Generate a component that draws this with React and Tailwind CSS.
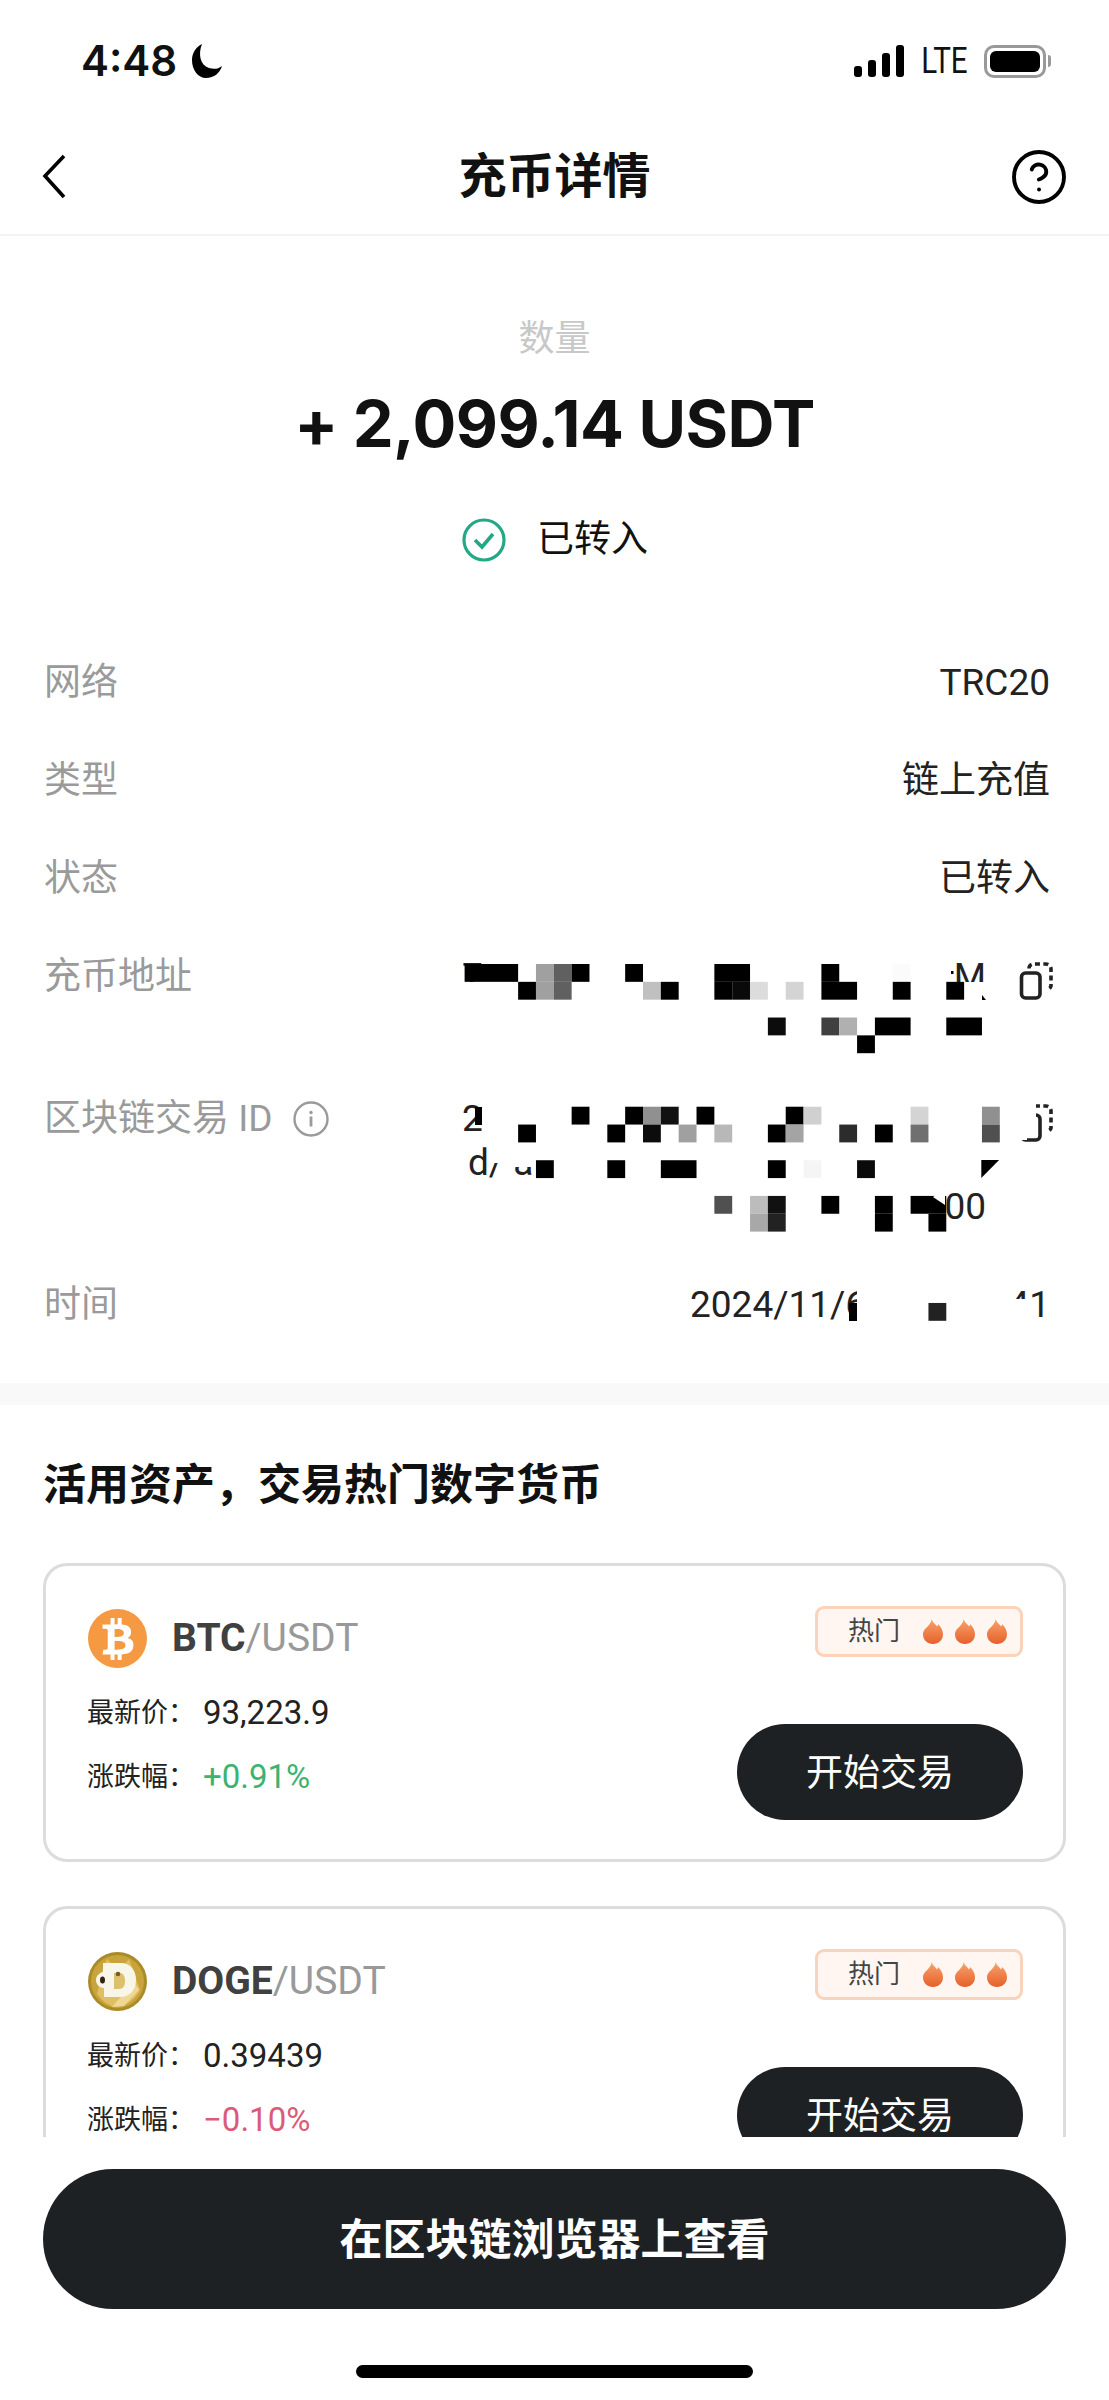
import React from "react";
import { CircleHelp } from "lucide-react";
import { FaBtc } from "react-icons/fa";

const S = 17.84;
const X0 = 464.6;
const Y0 = 964;
const cells = [
  [0,0,"#000",3],[4,0,"#a0a0a0"],[5,0,"#606060"],[6,0,"#000"],[9,0,"#000"],[14,0,"#000",2],[20,0,"#000"],[24,0,"#fbfbfb"],
  [3,1,"#000"],[4,1,"#a0a0a0"],[5,1,"#606060"],[10,1,"#c0c0c0"],[11,1,"#000"],[14,1,"#000"],[15,1,"#0a0a0a"],[16,1,"#dcdcdc"],[18,1,"#d4d4d4"],[20,1,"#000",2],[24,1,"#000"],[27,1,"#000"],
  [17,3,"#0c0c0c"],[20,3,"#404040"],[21,3,"#b0b0b0"],[23,3,"#000",2],[27,3,"#000",2],
  [22,4,"#000"],
  [6,8,"#000"],[9,8,"#000"],[10,8,"#909090"],[11,8,"#111"],[13,8,"#000"],[18,8,"#000"],[19,8,"#d0d0d0"],[25,8,"#d4d4d4"],[29,8,"#909090"],
  [3,9,"#000"],[8,9,"#000"],[10,9,"#0c0c0c"],[12,9,"#a0a0a0"],[14,9,"#b8b8b8"],[17,9,"#000"],[18,9,"#a4a4a4"],[21,9,"#2c2c2c"],[23,9,"#000"],[25,9,"#707070"],[29,9,"#505050"],
  [4,11,"#000"],[8,11,"#000"],[11,11,"#000",2],[17,11,"#000"],[19,11,"#f5f5f5"],[22,11,"#0a0a0a"],
  [14,13,"#505050"],[16,13,"#bcbcbc"],[17,13,"#111"],[20,13,"#000"],[23,13,"#000"],[25,13,"#000",2],
  [16,14,"#a8a8a8"],[17,14,"#222"],[23,14,"#000"],[26,14,"#000"],
  [26,19,"#222"],
];
const masks = [
  [460, 982, 60, 18],
  [958, 982, 34, 20],
  [1015, 1100, 21, 33],
  [1015, 1100, 12, 40],
  [490, 1145, 22, 18],
  [512, 1145, 26, 22],
  [857, 1280, 150, 44],
  [1003, 1299, 27, 26],
];

function Mosaic() {
  return (
    <svg className="absolute left-0 top-0 pointer-events-none" width="1109" height="720" viewBox="0 633 1109 720">
      {masks.map((m, i) => (
        <rect key={i} x={m[0]} y={m[1]} width={m[2]} height={m[3]} fill="#fff" />
      ))}
      {cells.map((c, i) => (
        <rect key={i} x={X0 + c[0] * S} y={Y0 + c[1] * S} width={S * (c[3] || 1)} height={S} fill={c[2]} />
      ))}
      <rect x="475" y="1107" width="7" height="18" fill="#000" />
      <rect x="849" y="1303" width="8" height="18" fill="#000" />
      <rect x="951" y="971" width="2.500" height="3" fill="#000" />
      <polygon points="982,995 986,1000 982,1000" fill="#000" />
      <polygon points="982,1160 982,1178 999.8,1160" fill="#000" transform="translate(-0.7,0)" />
      <polygon points="933,1197 945,1189 945,1205" fill="#fff" />
    </svg>
  );
}

function CopyIcon() {
  return (
    <svg width="34" height="38" viewBox="0 0 34 38" fill="none" className="mt-[7px] -mr-[3px] shrink-0" stroke="#222" strokeWidth="3.6">
      <rect x="2.500" y="11" width="18.500" height="25" rx="4" />
      <path d="M10 6.500 A4.500 4.500 0 0 1 14 2 H27 A5 5 0 0 1 32 7 V24 A4 4 0 0 1 28 27" strokeDasharray="5 3.400" />
    </svg>
  );
}

function InfoIcon() {
  return (
    <svg width="36" height="36" viewBox="0 0 36 36" fill="none" className="ml-[20px] shrink-0">
      <circle cx="18" cy="18" r="16.500" stroke="#9a9a9a" strokeWidth="2.400" />
      <circle cx="18" cy="11.500" r="1.700" fill="#9a9a9a" />
      <rect x="16.600" y="15.500" width="2.800" height="10" fill="#9a9a9a" />
    </svg>
  );
}

function Row({ label, children, extra }) {
  return (
    <div className="flex justify-between pt-[28px] pb-[26px] pl-[44px] pr-[59px]">
      <div className="flex items-center h-[44px] text-[#9a9a9a]">
        <span>{label}</span>
        {extra}
      </div>
      {children}
    </div>
  );
}

function Flame() {
  return (
    <svg width="20" height="25" viewBox="0 0 20 25">
      <defs>
        <linearGradient id="flameFill" x1="0" y1="0" x2="0" y2="1">
          <stop offset="0" stopColor="#f7a46c" />
          <stop offset="1" stopColor="#e75f2a" />
        </linearGradient>
      </defs>
      <path d="M8.500 0C10 4 12.500 5 14 7.500C15 6.500 15 5.500 15 5C18 8 20 11 20 15.500C20 21 15.500 25 10 25C4.500 25 0 21 0 15.500C0 11 3 9.500 5 7C7 4.500 8.500 3 8.500 0Z" fill="url(#flameFill)" />
    </svg>
  );
}

function BtcIcon() {
  return (
    <div className="w-[59px] h-[59px] rounded-full bg-[#f59a42] flex items-center justify-center shrink-0">
      <FaBtc className="text-white w-[42px] h-[42px]" />
    </div>
  );
}

function DogeIcon() {
  return (
    <svg width="59" height="59" viewBox="0 0 59 59" className="shrink-0">
      <circle cx="29.500" cy="29.500" r="29.500" fill="#a98c28" />
      <circle cx="29.500" cy="29.500" r="26.500" fill="#c9a43c" />
      <path d="M15 16L19 7L25 13H36L41 7L45 18L52 38Q44 53 29 55Q17 54 9 42Z" fill="#e0be62" />
      <path d="M24 55L46 30L51 38L36 54Z" fill="#efd893" />
      <path d="M15 11H33C43 11 48 19 48 28C48 38 42 45 32 45H16V36C11 36 8 32 8 28C8 24 11 21 15 20Z" fill="#f8f5e9" />
      <path d="M26 21H32C35 21 37 24 37 29C37 34 35 37 31 37H26Z" fill="#dcc06c" />
      <ellipse cx="14.500" cy="28" rx="2.500" ry="3.500" fill="#33240c" />
      <circle cx="30" cy="22" r="2.300" fill="#7a5a20" />
    </svg>
  );
}

function Card({ icon, base, last, change, changeClass }) {
  return (
    <div className="border-[3px] border-[#dcdcdc] rounded-[24px] h-[299px] shrink-0 flex justify-between pt-[43px] pl-[41px] pr-[40px]">
      <div>
        <div className="flex items-center h-[59px] gap-[25px]">
          <div className="ml-[1px]">{icon}</div>
          <div className="text-[39px] leading-[59px]">
            <span className="font-bold text-[#404040]">{base}</span>
            <span className="text-[#999999]">/USDT</span>
          </div>
        </div>
        <div className="flex items-center h-[40px] mt-[25px] text-[27px] text-[#222]">
          <span className="w-[116px]">最新价：</span>
          <span className="text-[33px]">{last}</span>
        </div>
        <div className="flex items-center h-[40px] mt-[24px] text-[27px] text-[#222]">
          <span className="w-[116px]">涨跌幅：</span>
          <span className={`text-[33px] ${changeClass}`}>{change}</span>
        </div>
      </div>
      <div className="flex flex-col items-end -mt-[3px]">
        <div className="w-[208px] h-[51px] rounded-[9px] border-[3px] border-[#f9d3ba] bg-[#fff6f1] flex items-center pl-[30px]">
          <span className="text-[26px] text-[#444] w-[75px]">热门</span>
          <div className="flex gap-[12px]">
            <Flame />
            <Flame />
            <Flame />
          </div>
        </div>
        <div className="mt-[67px] w-[286px] h-[96px] rounded-full bg-[#1e2124] text-white text-[37px] pt-[3px] flex items-center justify-center">
          开始交易
        </div>
      </div>
    </div>
  );
}

export default function App() {
  return (
    <div className="w-[1109px] h-[2400px] bg-white flex flex-col overflow-hidden relative text-[#111] font-[Roboto,'Noto_Sans_CJK_SC',sans-serif]">
      {/* status bar */}
      <div className="h-[120px] shrink-0 flex justify-between items-start pt-[44px] pl-[81px] pr-[58px]">
        <div className="flex items-center h-[34px] gap-[12px]">
          <span className="text-[42px] leading-[34px] font-semibold font-[Inter,sans-serif]">4:48</span>
          <svg width="34" height="34" viewBox="0 0 34 34">
            <path d="M13 0C9 10 11 21 20 24C25 25.500 29 25 33 22C31 29 25 34 17 34C9 34 3 26 3 16C3 9 7 3 13 0Z" fill="#000" />
          </svg>
        </div>
        <div className="flex items-center h-[34px]">
          <svg width="50" height="32" viewBox="0 0 50 32" className="mr-[12px]">
            <rect x="0" y="21" width="8" height="11" rx="3" />
            <rect x="14" y="15" width="8" height="17" rx="3" />
            <rect x="28" y="8" width="8" height="24" rx="3" />
            <rect x="42" y="0" width="8" height="32" rx="3" />
          </svg>
          <span className="text-[37px] leading-[34px] w-[52px] text-center inline-block scale-x-[0.8] whitespace-nowrap">LTE</span>
          <div className="ml-[16px] w-[62px] h-[33px] rounded-[10px] border-[3px] border-[#999] p-[3px]">
            <div className="w-full h-full rounded-[6px] bg-black" />
          </div>
          <div className="ml-[2px] w-[3px] h-[12px] rounded-r-full bg-[#999]" />
        </div>
      </div>

      {/* header */}
      <div className="h-[116px] shrink-0 border-b-2 border-[#f3f3f3] flex items-center justify-between pl-[41px] pr-[43px] relative">
        <svg width="26" height="46" viewBox="0 0 26 46" fill="none" className="-mt-[2px]">
          <path d="M23 3L4 23L23 44" stroke="#000" strokeWidth="3.600" />
        </svg>
        <div className="text-[48px] font-bold leading-[60px] absolute left-0 right-0 text-center">充币详情</div>
        <CircleHelp size={60} strokeWidth={1.55} color="#000" className="-mr-[3px]" />
      </div>

      {/* scroll area */}
      <div className="flex-1 min-h-0 overflow-hidden relative">
        <div className="flex flex-col items-center h-[397px]">
          <div className="mt-[78px] text-[36px] leading-[50px] text-[#c8c8c8]">数量</div>
          <div className="mt-[20px] text-[65px] leading-[80px] font-bold font-[Inter,sans-serif] tracking-[-0.5px]">+ 2,099.14 USDT</div>
          <div className="mt-[51px] h-[50px] flex items-center gap-[30px]">
            <svg width="46" height="44" viewBox="0 0 46 44" fill="none">
              <circle cx="23" cy="22" r="20" stroke="#22a884" strokeWidth="3.200" />
              <path d="M14 22L21 29L32 16" stroke="#22a884" strokeWidth="3.600" />
            </svg>
            <span className="text-[37px] text-[#111]">已转入</span>
          </div>
        </div>

        <div className="relative text-[37px] leading-[44px] text-[#222]">
          <Row label="网络"><span>TRC20</span></Row>
          <Row label="类型"><span>链上充值</span></Row>
          <Row label="状态"><span>已转入</span></Row>
          <Row label="充币地址">
            <div className="flex">
              <div className="w-[524px]">
                <div className="flex justify-between"><span>7</span><span>M</span></div>
                <div className="h-[44px]" />
              </div>
              <div className="ml-[33px] flex"><CopyIcon /></div>
            </div>
          </Row>
          <Row label="区块链交易 ID" extra={<InfoIcon />}>
            <div className="flex">
              <div className="w-[524px]">
                <div>2</div>
                <div className="pl-[6px]">{"d/\u00a0a"}</div>
                <div className="text-right">00</div>
              </div>
              <div className="ml-[33px] flex"><CopyIcon /></div>
            </div>
          </Row>
          <Row label="时间">
            <div className="w-[360px] flex justify-between">
              <span>2024/11/6</span>
              <span>41</span>
            </div>
          </Row>
          <Mosaic />
        </div>

        <div className="h-[22px] mt-[30px] bg-[#f9f9f9]" />

        <div className="px-[43px] flex flex-col">
          <div className="mt-[50px] text-[43px] leading-[60px] font-bold">活用资产，交易热门数字货币</div>
          <div className="mt-[48px] flex flex-col gap-[44px]">
            <Card icon={<BtcIcon />} base="BTC" last="93,223.9" change="+0.91%" changeClass="text-[#3cb371]" />
            <Card icon={<DogeIcon />} base="DOGE" last="0.39439" change="−0.10%" changeClass="text-[#dc5a78]" />
          </div>
        </div>
      </div>

      {/* footer */}
      <div className="h-[263px] shrink-0 bg-white flex flex-col items-center pt-[32px]">
        <div className="w-[1023px] h-[140px] rounded-full bg-[#1e2124] text-white text-[43px] font-bold pt-[2px] flex items-center justify-center">
          在区块链浏览器上查看
        </div>
        <div className="mt-[56px] w-[397px] h-[13px] rounded-full bg-black" />
      </div>
    </div>
  );
}
